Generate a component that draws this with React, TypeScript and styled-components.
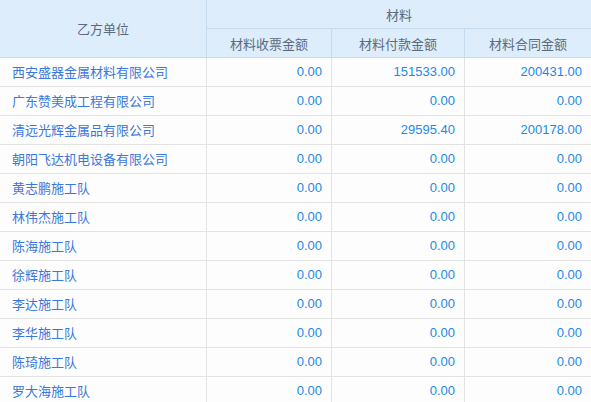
import React from "react";
import styled, { createGlobalStyle } from "styled-components";

const Global = createGlobalStyle`
  html, body { margin: 0; padding: 0; background: #fdfdfd; overflow: hidden; }
  body { font-family: "Liberation Sans", "Noto Sans CJK SC", sans-serif; font-size: 13px; }
`;

const Grid = styled.div`
  display: grid;
  grid-template-columns: 207px 125px 133px 126px;
  width: 591px;
`;

const HeadCell = styled.div<{ $rowSpan?: number; $colSpan?: number; $last?: boolean }>`
  box-sizing: border-box;
  background: #deedfb;
  color: #5b6b7c;
  height: ${(p) => (p.$rowSpan === 2 ? 58 : 29)}px;
  grid-row: span ${(p) => p.$rowSpan ?? 1};
  grid-column: span ${(p) => p.$colSpan ?? 1};
  border-right: ${(p) => (p.$last ? "none" : "1px solid #c7dbef")};
  border-bottom: 1px solid #c7dbef;
  display: flex;
  align-items: center;
  justify-content: center;
`;

const Cell = styled.div<{ $num?: boolean; $last?: boolean }>`
  box-sizing: border-box;
  min-width: 0;
  height: 29px;
  border-right: ${(p) => (p.$last ? "none" : "1px solid #e3e3e3")};
  border-bottom: 1px solid #e3e3e3;
  display: flex;
  align-items: center;
  justify-content: ${(p) => (p.$num ? "flex-end" : "flex-start")};
  padding: ${(p) => (p.$num ? "0 9px 1px 0" : "0 0 1px 12px")};
  color: ${(p) => (p.$num ? "#2388e6" : "#3a78dc")};
  white-space: nowrap;
  overflow: hidden;
`;

const rows: [string, string, string, string][] = [
  ["西安盛器金属材料有限公司", "0.00", "151533.00", "200431.00"],
  ["广东赞美成工程有限公司", "0.00", "0.00", "0.00"],
  ["清远光辉金属品有限公司", "0.00", "29595.40", "200178.00"],
  ["朝阳飞达机电设备有限公司", "0.00", "0.00", "0.00"],
  ["黄志鹏施工队", "0.00", "0.00", "0.00"],
  ["林伟杰施工队", "0.00", "0.00", "0.00"],
  ["陈海施工队", "0.00", "0.00", "0.00"],
  ["徐辉施工队", "0.00", "0.00", "0.00"],
  ["李达施工队", "0.00", "0.00", "0.00"],
  ["李华施工队", "0.00", "0.00", "0.00"],
  ["陈琦施工队", "0.00", "0.00", "0.00"],
  ["罗大海施工队", "0.00", "0.00", "0.00"],
];

export default function App() {
  return (
    <>
      <Global />
      <Grid>
        <HeadCell $rowSpan={2}>乙方单位</HeadCell>
        <HeadCell $colSpan={3} $last>材料</HeadCell>
        <HeadCell>材料收票金额</HeadCell>
        <HeadCell>材料付款金额</HeadCell>
        <HeadCell $last>材料合同金额</HeadCell>
        {rows.map((r, i) => (
          <React.Fragment key={i}>
            <Cell>{r[0]}</Cell>
            <Cell $num>{r[1]}</Cell>
            <Cell $num>{r[2]}</Cell>
            <Cell $num $last>{r[3]}</Cell>
          </React.Fragment>
        ))}
      </Grid>
    </>
  );
}
